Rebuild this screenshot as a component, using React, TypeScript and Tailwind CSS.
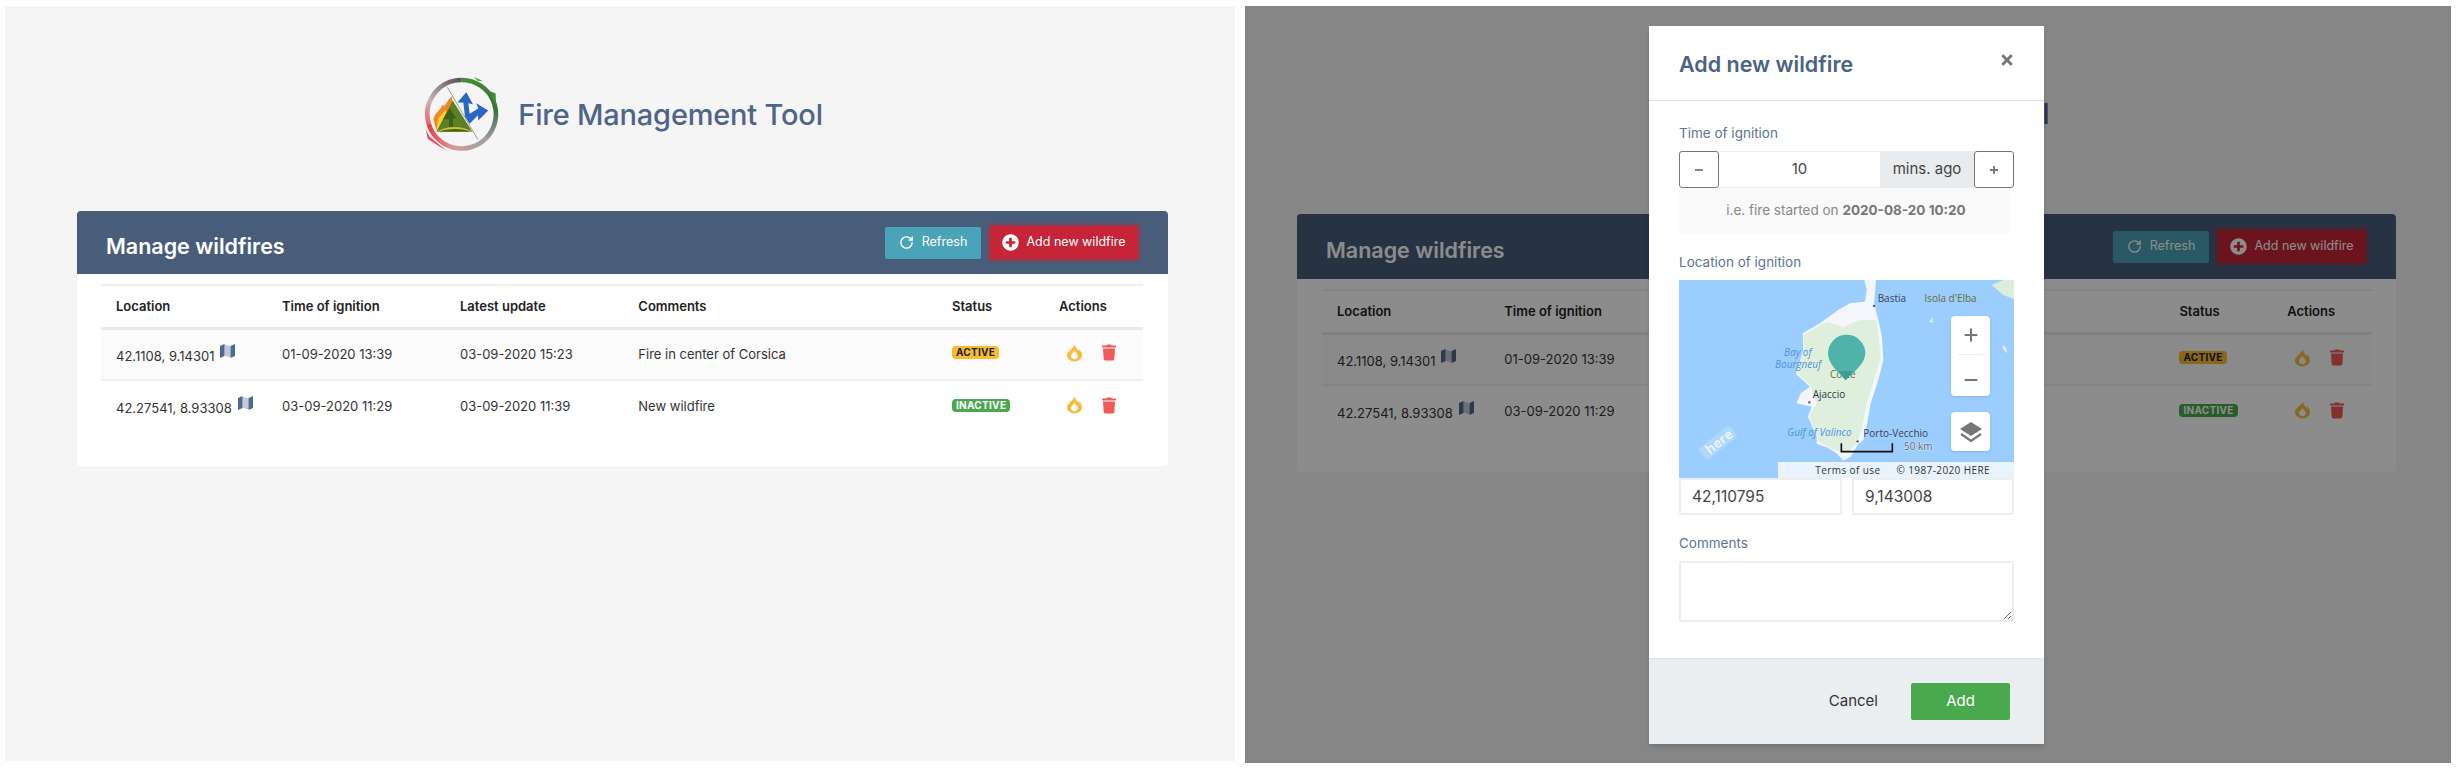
import { FaPlusCircle, FaTimes, FaTrash } from "react-icons/fa";
import { RotateCw } from "lucide-react";

type Fire = {
  location: string;
  ignited: string;
  updated: string;
  comment: string;
  status: "ACTIVE" | "INACTIVE";
};

const fires: Fire[] = [
  {
    location: "42.1108, 9.14301",
    ignited: "01-09-2020 13:39",
    updated: "03-09-2020 15:23",
    comment: "Fire in center of Corsica",
    status: "ACTIVE",
  },
  {
    location: "42.27541, 8.93308",
    ignited: "03-09-2020 11:29",
    updated: "03-09-2020 11:39",
    comment: "New wildfire",
    status: "INACTIVE",
  },
];

function Logo() {
  return (
    <svg viewBox="130 78 235 232" className="h-[77px] w-[79px] shrink-0">
      <defs>
        <linearGradient id="ringA" gradientUnits="userSpaceOnUse" x1="260" y1="90" x2="320" y2="270">
          <stop offset="0" stopColor="#3f8f35" />
          <stop offset="0.6" stopColor="#3c6f3a" />
          <stop offset="1" stopColor="#9a9a9a" />
        </linearGradient>
        <linearGradient id="ringB" gradientUnits="userSpaceOnUse" x1="320" y1="265" x2="145" y2="235">
          <stop offset="0" stopColor="#a0a0a0" />
          <stop offset="0.5" stopColor="#d99a9a" />
          <stop offset="1" stopColor="#ea3c48" />
        </linearGradient>
        <linearGradient id="ringC" gradientUnits="userSpaceOnUse" x1="145" y1="235" x2="250" y2="90">
          <stop offset="0" stopColor="#ea5a60" />
          <stop offset="0.4" stopColor="#c9b5b5" />
          <stop offset="1" stopColor="#555" />
        </linearGradient>
      </defs>
      <g fill="none" strokeWidth="14">
        <path d="M248 90 A103 103 0 0 1 322 265" stroke="url(#ringA)" />
        <path d="M322 265 A103 103 0 0 1 149 222" stroke="url(#ringB)" />
        <path d="M149 222 A103 103 0 0 1 248 90" stroke="url(#ringC)" />
      </g>
      <path d="M140 240 L152 262 L205 305 L178 288 L146 268 Z" fill="#ea4a50" />
      <path d="M285 80 L312 94 L296 92 Z" fill="#4b9a3c" />
      <path d="M335 125 L350 130 L352 165 L342 150 Z" fill="#3f8f35" />
      <path d="M163 210 C165 190 185 180 190 165 C198 175 205 150 218 138 L225 200 L190 240 L172 240 Z" fill="#ef8b22" />
      <path d="M172 240 L178 205 L200 180 L215 240 Z" fill="#f3d13c" />
      <path d="M221 152 L280 246 L172 246 Z" fill="#5f7f24" />
      <path d="M212 175 L232 205 L222 205 L222 232 L210 232 L210 208 L192 208 Z" fill="#3f5f1c" />
      <path d="M172 246 C200 228 250 226 280 246 Z" fill="#f0d33c" opacity="0.75" />
      <path d="M178 246 C205 236 250 234 274 246 Z" fill="#3f6a1a" />
      <path d="M205 112 L297 270" stroke="#9a9a9a" strokeWidth="3" fill="none" />
      <path
        d="M235 158 L262 127 L282 163 L268 160 L272 192 L298 176 L292 160 L328 182 L298 212 L297 196 L272 222 L258 200 L253 158 Z"
        fill="#2a66c4"
      />
    </svg>
  );
}

function FlameIcon() {
  return (
    <svg viewBox="0 0 16 18" className="h-[18px] w-[15px] text-[#f5bd3f]">
      <path
        fillRule="evenodd"
        fill="currentColor"
        d="M8.5 0.3C9 3.8 11 5 12 6.6C12.4 6 12.7 5.5 13 5C15 7 16 9.5 16 11.5C16 15.2 12.5 18 8 18C3.5 18 0 15.2 0 11.5C0 7.5 5.5 5 8.5 0.3ZM8 15.6C5.7 15.6 4.2 14.2 4.2 12.3C4.2 10.4 6.3 9 7.8 6.8C8.4 8.4 11.6 9.8 11.6 12.5C11.6 14.3 10 15.6 8 15.6Z"
      />
    </svg>
  );
}

function MapIcon() {
  return (
    <svg viewBox="0 0 15 14" className="ml-[6px] inline h-[14px] w-[15px] align-[3px] text-[#4f6a90]">
      <path d="M0 2L4.5 0V12L0 14Z" fill="currentColor" />
      <path d="M10.5 2L15 0V12L10.5 14Z" fill="currentColor" />
      <path d="M4.5 0.5L10.5 2.5V13.5L4.5 11.5Z" fill="currentColor" opacity="0.35" />
    </svg>
  );
}

function FireTable() {
  return (
    <table className="w-full table-fixed border-t-2 border-[#f0f0f0] text-[13px] text-[#333]">
      <thead>
        <tr className="h-[43px] border-b-[3px] border-[#e9e9e9] text-left font-semibold text-[#222]">
          <th className="w-[15.93%] pl-[15px] font-semibold">Location</th>
          <th className="w-[17.08%] pl-[15px] font-semibold">Time of ignition</th>
          <th className="w-[17.12%] pl-[15px] font-semibold">Latest update</th>
          <th className="w-[30.1%] pl-[15px] font-semibold">Comments</th>
          <th className="w-[10.27%] pl-[15px] font-semibold">Status</th>
          <th className="pl-[15px] font-semibold">Actions</th>
        </tr>
      </thead>
      <tbody>
        {fires.map((fire, i) => (
          <tr
            key={fire.location}
            className={`h-[52px] ${i === 0 ? "border-b-2 border-[#f0f0f0] bg-[#fbfbfb]" : ""}`}
          >
            <td className="pl-[15px] pt-[2px] whitespace-nowrap">
              {fire.location}
              <MapIcon />
            </td>
            <td className="pl-[15px]">{fire.ignited}</td>
            <td className="pl-[15px]">{fire.updated}</td>
            <td className="pl-[15px]">{fire.comment}</td>
            <td className="pl-[15px]">
              <span
                className={`mb-[3px] block w-fit rounded-[4px] px-[4px] text-[10px] leading-[13px] font-bold tracking-[0.3px] ${
                  fire.status === "ACTIVE" ? "bg-[#f6bc2f] text-[#222]" : "bg-[#4aa84e] text-white"
                }`}
              >
                {fire.status}
              </span>
            </td>
            <td className="pl-[23px]">
              <div className="mb-[3px] flex items-center gap-[20px]">
                <FlameIcon />
                <FaTrash className="h-[17px] w-[14px] text-[#ee5a57]" />
              </div>
            </td>
          </tr>
        ))}
      </tbody>
    </table>
  );
}

function ManagePage({ dimmed }: { dimmed?: boolean }) {
  return (
    <div className="flex flex-col">
      <div
        className={`flex h-[77px] items-center justify-center ${
          dimmed ? "mt-[69px] gap-[19px]" : "mt-[70px] ml-[5px] gap-[17px]"
        }`}
      >
        <Logo />
        <h1 className="text-[29px] font-medium tracking-[-0.2px] whitespace-nowrap text-[#50648a]">
          Fire Management Tool
        </h1>
      </div>
      <div
        className={
          dimmed
            ? "mt-[62px] ml-[52px] h-[258px] w-[1099px] rounded-[4px] bg-white"
            : "mt-[58px] ml-[72px] h-[255px] w-[1091px] rounded-[4px] bg-white"
        }
      >
        <div
          className={`flex items-center justify-between rounded-t-[4px] bg-[#475d7a] pl-[29px] pr-[30px] ${
            dimmed ? "h-[65px]" : "h-[63px]"
          }`}
        >
          <h2 className="mt-[7px] text-[21.5px] font-semibold text-white">Manage wildfires</h2>
          <div className="flex items-center gap-[9px] text-[12.5px] text-white">
            <button className="flex h-[32px] w-[96px] items-center justify-center gap-[8px] rounded-[2px] bg-[#4aa3b8]">
              <RotateCw size={15} strokeWidth={2.2} />
              Refresh
            </button>
            <button className="flex h-[33px] w-[148px] items-center justify-center gap-[7px] rounded-[2px] bg-[#c52537] ring-[3px] ring-[#c52537]/40">
              <FaPlusCircle size={17} />
              Add new wildfire
            </button>
          </div>
        </div>
        <div className={dimmed ? "mt-[10px] mr-[24px] ml-[25px]" : "mt-[10px] mr-[25px] ml-[24px]"}>
          <FireTable />
        </div>
      </div>
    </div>
  );
}

function CorsicaMap() {
  const label = "font-['Open_Sans',sans-serif] text-[30px]";
  return (
    <div className="relative h-[198px] w-[335px] overflow-hidden bg-[#9bcdff]">
      <svg viewBox="27 30 1005 594" className="h-full w-full">
        <path
          d="M583 30 L618 30 L612 100 L625 150 L636 200 L640 270 L625 330 L602 400 L590 470 L580 510 L565 522 L542 560 L520 572 L500 550 L470 532 L440 522 L440 500 L414 440 L425 410 L380 400 L392 370 L420 350 L378 312 L400 240 L398 190 L450 160 L508 118 L540 100 L585 95 L590 60 Z"
          fill="#f3f7fb"
        />
        <path
          d="M570 150 L620 150 L632 260 L612 330 L590 400 L575 480 L560 520 L530 548 L490 540 L445 512 L418 440 L440 400 L420 345 L382 310 L405 232 L400 195 L470 155 L520 172 Z"
          fill="#deefdd"
        />
        <path d="M965 45 L1000 30 L1032 30 L1032 88 L1000 75 Z" fill="#dbeedb" />
        <path d="M778 155 L786 142 L790 158 Z" fill="#dbeedb" />
        <path d="M997 225 L1008 232 L1012 250 L1000 240 Z" fill="#dbeedb" />
        <circle cx="612" cy="108" r="3.5" fill="#556" />
        <circle cx="418" cy="397" r="3.5" fill="#556" />
        <circle cx="563" cy="514" r="3.5" fill="#556" />
        <text x="623" y="97" className={label} fill="#3b3f52">Bastia</text>
        <text x="763" y="95" className={label} fill="#6a6d2a">Isola d'Elba</text>
        <text x="342" y="257" className={label} fontStyle="italic" fill="#4d93e0">Bay of</text>
        <text x="315" y="293" className={label} fontStyle="italic" fill="#4d93e0">Bourgneuf</text>
        <text x="480" y="323" className={label} fill="#6a6d2a">Corte</text>
        <text x="428" y="383" className={label} fill="#2f3342">Ajaccio</text>
        <text x="352" y="497" className={label} fontStyle="italic" fill="#4d93e0">Gulf of Valinco</text>
        <text x="580" y="500" className={label} fill="#3b3f52">Porto-Vecchio</text>
        <text x="702" y="541" className={label} fill="#5a6270" stroke="#dcebf8" strokeWidth="3" paintOrder="stroke">
          50 km
        </text>
        <path d="M514 520 L514 545 L667 545 L667 520" fill="none" stroke="#111" strokeWidth="5" />
        <path
          d="M474 250 A56 56 0 1 1 586 250 C586 282 548 308 527 331 C506 308 474 282 474 250 Z"
          fill="#4fb3ac"
        />
        <path d="M506 304 L550 304 L527 331 Z" fill="#3f9a93" />
        <g transform="rotate(-38 145 520)">
          <rect x="86" y="496" width="118" height="44" rx="8" fill="#c3e0f7" opacity="0.5" />
          <text x="104" y="531" fontSize="40" fontWeight="700" fill="#eaf5fd" className="font-['Open_Sans',sans-serif]">
            here
          </text>
        </g>
      </svg>
      <div className="absolute top-[36px] right-[24px] flex h-[80px] w-[39px] flex-col items-center rounded-[4px] bg-white text-[#777] shadow-sm">
        <svg viewBox="0 0 20 20" className="mt-[11px] h-[16px] w-[16px]">
          <path d="M10 2V18M2 10H18" stroke="currentColor" strokeWidth="2.6" />
        </svg>
        <div className="mt-[11px] h-px w-[25px] bg-[#eee]" />
        <svg viewBox="0 0 20 20" className="mt-[17px] h-[16px] w-[16px]">
          <path d="M2 10H18" stroke="currentColor" strokeWidth="2.6" />
        </svg>
      </div>
      <div className="absolute top-[132px] right-[24px] flex h-[39px] w-[39px] items-center justify-center rounded-[4px] bg-white shadow-sm">
        <svg viewBox="0 0 24 24" className="h-[24px] w-[24px] text-[#777]">
          <path d="M12 2L23 9L12 16L1 9Z" fill="currentColor" />
          <path d="M2 14L12 21L22 14" fill="none" stroke="currentColor" strokeWidth="2.2" />
        </svg>
      </div>
      <div className="absolute right-0 bottom-0 flex h-[16px] w-[236px] items-center justify-end gap-[16px] bg-[#e8f3fe] pr-[24px] font-['Open_Sans',sans-serif] text-[10px] tracking-[0.4px] text-[#333]">
        <span>Terms of use</span>
        <span>© 1987-2020 HERE</span>
      </div>
    </div>
  );
}

function AddFireModal() {
  return (
    <div className="absolute top-[20px] left-[404px] flex h-[718px] w-[395px] flex-col bg-white shadow-md">
      <div className="flex h-[75px] shrink-0 items-start justify-between border-b border-[#dee2e6] pl-[30px] pr-[30px]">
        <h3 className="mt-[23px] text-[21.5px] leading-[30px] font-semibold text-[#4a6285]">Add new wildfire</h3>
        <FaTimes className="mt-[26px] h-[16px] w-[14px] text-[#777]" />
      </div>
      <div className="flex flex-col px-[30px] text-[#5d7295]">
        <label className="mt-[22px] mb-[8px] text-[13.5px] leading-[20px]">Time of ignition</label>
        <div className="flex h-[37px] text-[15px] text-[#444]">
          <button className="flex w-[40px] items-center justify-center rounded-[3px] border border-[#777] bg-white text-[#777]">
            <svg viewBox="0 0 10 10" className="h-[10px] w-[10px]">
              <path d="M1 5H9" stroke="currentColor" strokeWidth="1.8" />
            </svg>
          </button>
          <div className="flex w-[161px] items-center justify-center border-y border-[#ececec] bg-white">10</div>
          <div className="flex w-[94px] items-center justify-center bg-[#e9ecef]">mins. ago</div>
          <button className="flex w-[40px] items-center justify-center rounded-[3px] border border-[#777] bg-white text-[#777]">
            <svg viewBox="0 0 10 10" className="h-[10px] w-[10px]">
              <path d="M1 5H9M5 1V9" stroke="currentColor" strokeWidth="1.8" />
            </svg>
          </button>
        </div>
        <p className="flex h-[45px] w-[331px] items-center justify-center bg-[#fafafa] pl-[3px] text-[13.5px] text-[#888]">
          i.e. fire started on&nbsp;<b className="font-bold text-[#777]">2020-08-20 10:20</b>
        </p>
        <label className="mt-[19px] mb-[8px] text-[13.5px] leading-[20px]">Location of ignition</label>
        <CorsicaMap />
        <div className="flex gap-[10px]">
          <input
            readOnly
            value="42,110795"
            className="h-[37px] w-[163px] rounded-[2px] border-2 border-[#eee] px-[11px] text-[15.5px] text-[#444] outline-none"
          />
          <input
            readOnly
            value="9,143008"
            className="h-[37px] w-[162px] rounded-[2px] border-2 border-[#eee] px-[11px] text-[15.5px] text-[#444] outline-none"
          />
        </div>
        <label className="mt-[18px] mb-[8px] text-[13.5px] leading-[20px]">Comments</label>
        <textarea readOnly className="h-[61px] w-[335px] rounded-[2px] border-2 border-[#eee] outline-none" />
      </div>
      <div className="mt-auto flex h-[86px] items-center justify-end gap-[33px] border-t border-[#dee2e6] bg-[#ebeef0] pr-[34px] text-[15px]">
        <span className="text-[#333]">Cancel</span>
        <button className="h-[37px] w-[99px] rounded-[2px] bg-[#4aa84e] text-white">Add</button>
      </div>
    </div>
  );
}

export default function App() {
  return (
    <div className="flex h-[772px] w-[2458px] gap-[10px] overflow-hidden bg-white pt-[6px] pl-[5px] font-[Inter,sans-serif]">
      <section className="h-[755px] w-[1230px] bg-[#f5f5f5]">
        <ManagePage />
      </section>
      <section className="relative h-[757px] w-[1206px] overflow-hidden bg-[#f5f5f5]">
        <ManagePage dimmed />
        <div className="absolute inset-0 bg-black/45" />
        <AddFireModal />
      </section>
    </div>
  );
}
